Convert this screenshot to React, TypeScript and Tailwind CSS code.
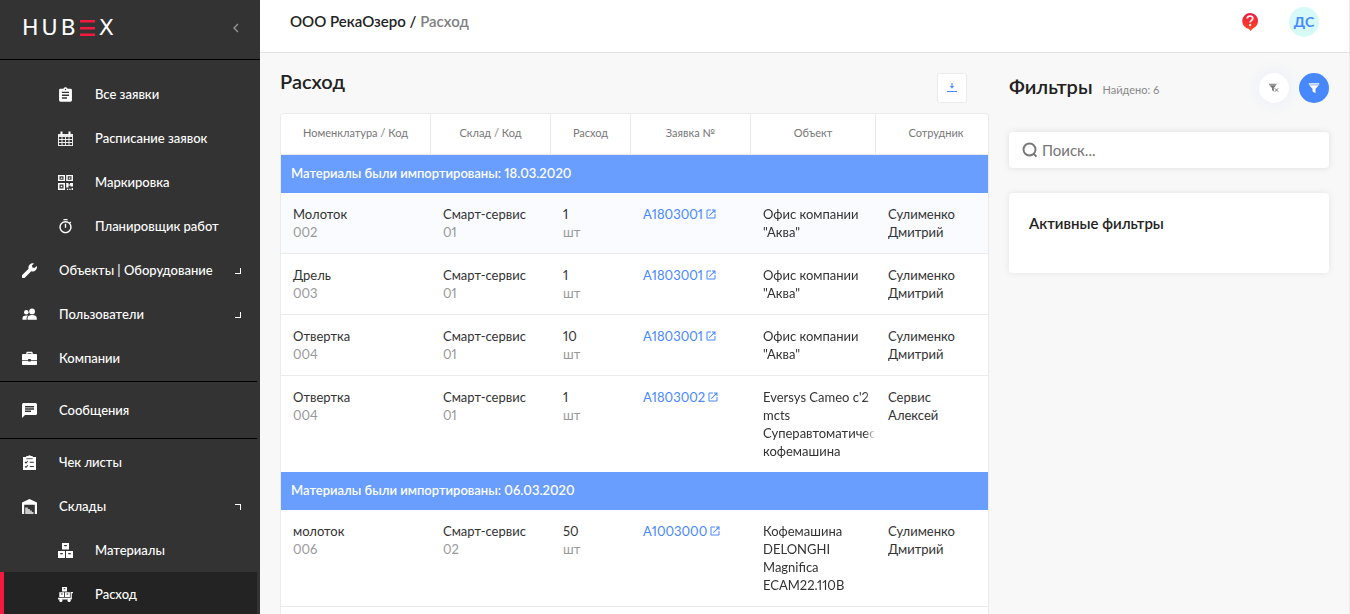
import type { ReactNode } from "react";

const MDI = {
  tasks:
    "M19 3h-4.18C14.4 1.84 13.3 1 12 1s-2.4.84-2.82 2H5a2 2 0 0 0-2 2v14c0 1.1.9 2 2 2h14a2 2 0 0 0 2-2V5a2 2 0 0 0-2-2zm-7 0a1 1 0 1 1 0 2 1 1 0 0 1 0-2zm2 14H7v-2h7v2zm3-4H7v-2h10v2zm0-4H7V7h10v2z",
  timer:
    "M15 1H9v2h6V1zm-4 13h2V8h-2v6zm8.03-6.61 1.42-1.42c-.43-.51-.9-.99-1.41-1.41l-1.42 1.42A8.96 8.96 0 0 0 12 4a9 9 0 1 0 7.03 3.39zM12 20a7 7 0 1 1 0-14 7 7 0 0 1 0 14z",
  chat: "M20 2H4a2 2 0 0 0-1.99 2L2 22l4-4h14a2 2 0 0 0 2-2V4a2 2 0 0 0-2-2zM6 9h12v2H6V9zm8 5H6v-2h8v2zm4-6H6V6h12v2z",
  external:
    "M19 19H5V5h7V3H5a2 2 0 0 0-2 2v14c0 1.1.9 2 2 2h14a2 2 0 0 0 2-2v-7h-2v7zM14 3v2h3.59l-9.83 9.83 1.41 1.41L19 6.41V10h2V3h-7z",
};

function Glyph({ d, viewBox = "0 0 24 24", className = "size-[15px]" }: { d: string; viewBox?: string; className?: string }) {
  return (
    <svg viewBox={viewBox} fill="currentColor" className={className} aria-hidden="true">
      <path d={d} />
    </svg>
  );
}

function Small({ children }: { children: ReactNode }) {
  return (
    <svg viewBox="0.5 0.5 15 15" fill="currentColor" className="size-[15px]" aria-hidden="true">
      {children}
    </svg>
  );
}

const CalendarIcon = (
  <Small>
    <path
      fillRule="evenodd"
      d="M.5 3.500h15v12H.5zM1.500 6.500v2h2.500v-2zm3.500 0v2h2.500v-2zm3.500 0v2H11v-2zm3.500 0v2h2.500v-2zM1.500 9.500v2h2.500v-2zm3.500 0v2h2.500v-2zm3.500 0v2H11v-2zm3.500 0v2h2.500v-2zM1.500 12.500v2h2.500v-2zm3.500 0v2h2.500v-2zm3.500 0v2H11v-2zm3.500 0v2h2.500v-2z"
      opacity=".9"
    />
    <path d="M3 1h2v3.500H3zM11 1h2v3.500h-2z" />
  </Small>
);

const QrIcon = (
  <Small>
    <path
      fillRule="evenodd"
      d="M.5.5h7v6h-7zm1.500 1.300v3.400h4V1.800zM8.700.5h6.800v6H8.700zm1.500 1.300v3.400H14V1.800zM.5 8.500h7v7h-7zm1.500 1.500v4h4v-4z"
    />
    <path d="M3.200 2.900h1.600v1.400H3.200zM11.300 2.900h1.600v1.400h-1.600zM3.200 11.200h1.600v1.600H3.200zM8.700 8.500H11V10h1.500V8.500h3V12H13v-1h-2v2H8.700zM9.300 14.300h1.400v1.200H9.300zM11.700 14.300h1.400v1.200h-1.400zM14.100 13.500h1.400v2h-1.400z" />
  </Small>
);

const WrenchIcon = (
  <Small>
    <path d="M15.200 3.400 12.900 5.600l-2-.5-.5-2L12.600.9a4.300 4.300 0 0 0-5.500 5.300L.7 12.600a1.700 1.700 0 0 0 2.600 2.600l6.400-6.400a4.300 4.300 0 0 0 5.500-5.400z" />
  </Small>
);

const UsersIcon = (
  <Small>
    <circle cx="4.800" cy="5.800" r="2.300" />
    <circle cx="10.600" cy="4.900" r="2.900" />
    <path d="M1 13.200V11.500C1 9.800 2.600 9 4.800 9c.7 0 1.300.1 1.800.3-1 .6-1.500 1.500-1.500 2.600v1.300zM6 13.200v-1.400c0-2 2-3.200 4.600-3.200s4.700 1.200 4.700 3.200v1.400z" />
  </Small>
);

const BriefcaseIcon = (
  <Small>
    <path
      fillRule="evenodd"
      d="M4.800 3.500V2.700c0-.9.5-1.400 1.200-1.400h4c.7 0 1.200.5 1.200 1.400v.8h3.300c.6 0 1 .4 1 1v5H9.300v-1H6.700v1H.5v-5c0-.6.4-1 1-1zm1.200 0h4v-.8H6z"
    />
    <path d="M.5 10.200h6.200v.9h2.600v-.9h6.200V13.500c0 .6-.4 1-1 1h-13c-.6 0-1-.4-1-1z" />
  </Small>
);

const ChecklistIcon = (
  <Small>
    <path d="M1.500 2.500h3.300V1.600h1.900a1.400 1.400 0 0 1 2.600 0h1.900v.9h3.300v13h-13z" />
    <path d="M4.800 4.200h6.400" stroke="#333333" strokeWidth=".8" />
    <path
      d="m3.500 7.500 1 1 1.800-2M3.500 11.800l1 1 1.800-2M8.300 7.700h4M8.300 12h4"
      fill="none"
      stroke="#333333"
      strokeWidth="1.100"
    />
  </Small>
);

const WarehouseIcon = (
  <Small>
    <path fillRule="evenodd" d="M8 .5 15.500 4v11.500h-2.200V6.300H2.700v9.200H.5V4z" />
    <path d="M3.700 9h2.600v1.500h2V12h2v1.500H12v2H3.700z" opacity=".75" />
  </Small>
);

const BoxesIcon = (
  <Small>
    <path
      fillRule="evenodd"
      d="M4.500.5h7v6.500h-7zm2.200 2v1.200h2.600V2.500zM.5 8.500h7v7h-7zm2.200 2v1.200h2.600v-1.200zM8.500 8.500h7v7h-7zm2.200 2v1.200h2.600v-1.200z"
    />
  </Small>
);

const CartIcon = (
  <Small>
    <path
      fillRule="evenodd"
      d="M4.500.5h5v4.500h-5zm1.700 1.300v.9h1.600v-.9zM1.800 5.700h4.900v4.800H1.800zm1.600 1.400v.8h1.700v-.8zM7.500 5.700h4.900v4.800H7.500zm1.600 1.400v.8h1.700v-.8z"
    />
    <path d="M.5 11.200h12.600V5.500h2.400v1.200h-1.200v6.400H.5z" />
    <circle cx="3.400" cy="13.900" r="1.600" />
    <circle cx="11.600" cy="13.900" r="1.600" />
  </Small>
);

type Item = {
  label: string;
  icon: ReactNode;
  nested?: boolean;
  corner?: "down" | "up";
  active?: boolean;
};

const NAV: Item[][] = [
  [
    { label: "Все заявки", icon: <Glyph d={MDI.tasks} viewBox="1.500 .5 21 21" />, nested: true },
    { label: "Расписание заявок", icon: CalendarIcon, nested: true },
    { label: "Маркировка", icon: QrIcon, nested: true },
    { label: "Планировщик работ", icon: <Glyph d={MDI.timer} viewBox="1 1 22 22" />, nested: true },
    { label: "Объекты | Оборудование", icon: WrenchIcon, corner: "down" },
    { label: "Пользователи", icon: UsersIcon, corner: "down" },
    { label: "Компании", icon: BriefcaseIcon },
  ],
  [{ label: "Сообщения", icon: <Glyph d={MDI.chat} viewBox="2 2 20 20" /> }],
  [
    { label: "Чек листы", icon: ChecklistIcon },
    { label: "Склады", icon: WarehouseIcon, corner: "up" },
    { label: "Материалы", icon: BoxesIcon, nested: true },
    { label: "Расход", icon: CartIcon, nested: true, active: true },
  ],
];

const GROUP_STYLES = ["pt-3 pb-px", "border-t border-black py-1.5", "border-t border-black pt-px"];

function NavItem({ item }: { item: Item }) {
  return (
    <li>
      <a
        href="#"
        aria-current={item.active ? "page" : undefined}
        className={`flex h-11 items-center border-l-4 pt-px pr-4 ${item.nested ? "pl-[54px]" : "pl-[18px]"} ${
          item.active ? "border-[#f5183f] bg-[#232323]" : "border-transparent"
        }`}
      >
        <span className="flex w-[37px] shrink-0">{item.icon}</span>
        <span className="flex-1 whitespace-nowrap">{item.label}</span>
        {item.corner && (
          <span
            className={`size-1.5 border-r border-white ${item.corner === "down" ? "border-b" : "border-t"}`}
          />
        )}
      </a>
    </li>
  );
}

function Sidebar() {
  return (
    <aside className="flex w-[260px] shrink-0 flex-col bg-[#333333] text-[13px] font-medium text-white">
      <div className="flex h-[60px] shrink-0 items-center justify-between border-b border-black pr-5 pb-[3px] pl-[22px]">
        <a
          href="#"
          aria-label="HubEx"
          className="flex items-center gap-[3px] font-['DejaVu_Sans'] text-[22px] leading-none font-normal"
        >
          <span>H</span>
          <span>U</span>
          <span>B</span>
          <svg viewBox="0 0 15 16" className="mx-px h-4 w-[15px]" fill="#f5183f" aria-hidden="true">
            <path d="M0 0h15v2.500H0zM0 7h15v2.500H0zM0 13.500h15V16H0z" />
          </svg>
          <span>X</span>
        </a>
        <button type="button" aria-label="Свернуть меню" className="text-[#999999]">
          <svg viewBox="0 0 8 10" className="h-2.5 w-2" fill="none" stroke="currentColor" strokeWidth="1.300">
            <path d="M6 1 2 5l4 4" />
          </svg>
        </button>
      </div>
      <nav className="mr-[3px] min-h-0 flex-1 overflow-hidden">
        {NAV.map((group, i) => (
          <ul key={i} className={GROUP_STYLES[i]}>
            {group.map((item) => (
              <NavItem key={item.label} item={item} />
            ))}
          </ul>
        ))}
      </nav>
    </aside>
  );
}

type Row = {
  name: string;
  code: string;
  stockCode: string;
  qty: string;
  request: string;
  object: string[];
  person: string[];
};

const OFFICE = ["Офис компании", '"Аква"'];
const SULIMENKO = ["Сулименко", "Дмитрий"];

const GROUPS: { title: string; rows: Row[] }[] = [
  {
    title: "Материалы были импортированы: 18.03.2020",
    rows: [
      { name: "Молоток", code: "002", stockCode: "01", qty: "1", request: "A1803001", object: OFFICE, person: SULIMENKO },
      { name: "Дрель", code: "003", stockCode: "01", qty: "1", request: "A1803001", object: OFFICE, person: SULIMENKO },
      { name: "Отвертка", code: "004", stockCode: "01", qty: "10", request: "A1803001", object: OFFICE, person: SULIMENKO },
      {
        name: "Отвертка",
        code: "004",
        stockCode: "01",
        qty: "1",
        request: "A1803002",
        object: ["Eversys Cameo c'2", "mcts", "Суперавтоматическая", "кофемашина"],
        person: ["Сервис", "Алексей"],
      },
    ],
  },
  {
    title: "Материалы были импортированы: 06.03.2020",
    rows: [
      {
        name: "молоток",
        code: "006",
        stockCode: "02",
        qty: "50",
        request: "A1003000",
        object: ["Кофемашина", "DELONGHI", "Magnifica", "ECAM22.110B"],
        person: SULIMENKO,
      },
    ],
  },
];

const COLUMNS = ["Номенклатура / Код", "Склад / Код", "Расход", "Заявка №", "Объект", "Сотрудник"];

function Lines({ lines }: { lines: string[] }) {
  return (
    <div className="overflow-hidden whitespace-nowrap">
      {lines.map((line) => (
        <div key={line}>{line}</div>
      ))}
    </div>
  );
}

function MaterialsTable() {
  return (
    <div className="flex-1 overflow-hidden rounded-t border border-b-0 border-[#ebebeb] bg-white">
      <table className="w-[715px] table-fixed border-separate border-spacing-0 text-left proportional-nums">
        <colgroup>
          <col className="w-[150px]" />
          <col className="w-[120px]" />
          <col className="w-[80px]" />
          <col className="w-[120px]" />
          <col className="w-[125px]" />
          <col className="w-[120px]" />
        </colgroup>
        <thead>
          <tr>
            {COLUMNS.map((c) => (
              <th
                key={c}
                scope="col"
                className="h-[41px] border-r border-b border-[#ebebeb] p-0 pb-px text-center text-[11px] font-normal text-[#777777] last:border-r-0"
              >
                {c}
              </th>
            ))}
          </tr>
        </thead>
        {GROUPS.map((group, g) => (
          <tbody key={group.title}>
            <tr>
              <th colSpan={6} scope="colgroup" className="h-[38px] bg-[#699eff] px-2.5 py-0 text-[13px] font-semibold text-white">
                {group.title}
              </th>
            </tr>
            {group.rows.map((row, r) => (
              <tr
                key={r}
                className={`align-top text-[13px] leading-[18px] text-[#333333] *:border-[#ebebeb] *:py-3 *:pl-3 ${
                  g === 0 && r === 0 ? "bg-[#f9fbfe]" : ""
                } ${g === 0 && r === group.rows.length - 1 ? "" : "*:border-b"}`}
              >
                <td>
                  <div>{row.name}</div>
                  <div className="text-[#999999]">{row.code}</div>
                </td>
                <td>
                  <div className="whitespace-nowrap">Смарт-сервис</div>
                  <div className="text-[#999999]">{row.stockCode}</div>
                </td>
                <td>
                  <div>{row.qty}</div>
                  <div className="text-[#999999]">шт</div>
                </td>
                <td>
                  <a href="#" className="flex items-center gap-[3px] text-[#4788ff]">
                    {row.request}
                    <Glyph d={MDI.external} viewBox="2 2 20 20" className="size-2.5" />
                  </a>
                </td>
                <td>
                  <div className="mask-r-from-[90%] mask-r-to-100%">
                    <Lines lines={row.object} />
                  </div>
                </td>
                <td>
                  <Lines lines={row.person} />
                </td>
              </tr>
            ))}
          </tbody>
        ))}
      </table>
    </div>
  );
}

function Filters() {
  return (
    <aside className="w-80 shrink-0">
      <div className="flex h-[70px] items-center justify-between">
        <div className="flex items-baseline gap-2.5 pb-1">
          <h2 className="text-[20px] font-semibold text-[#222222]">Фильтры</h2>
          <span className="text-[11px] text-[#888888]">Найдено: 6</span>
        </div>
        <div className="flex gap-2.5">
          <button
            type="button"
            aria-label="Сбросить фильтры"
            className="flex size-[30px] items-center justify-center rounded-full bg-white text-[#777777] shadow-[0_0_16px_#e8ecf8]"
          >
            <svg viewBox="0 0 10 10" className="size-2.5" fill="currentColor" aria-hidden="true">
              <path d="M0 .7h7.500v1H0zM.3 2.200h6.900L4.800 5v3.500L3 7.300V5z" />
              <path d="m5.800 5.300 3.400 3.400M9.200 5.300 5.800 8.700" stroke="currentColor" strokeWidth="1" />
            </svg>
          </button>
          <button
            type="button"
            aria-label="Показать фильтры"
            className="flex size-[30px] items-center justify-center rounded-full bg-[#4788ff] text-white"
          >
            <svg viewBox="0 0 12 12" className="size-3" fill="currentColor" aria-hidden="true">
              <path d="M.8 1h10.400v1.800H.8z" opacity=".75" />
              <path d="M1.200 3.300h9.600L7.500 6.800v4.400l-3-1.600V6.800z" />
            </svg>
          </button>
        </div>
      </div>
      <label className="mt-[9px] flex h-9 items-center gap-1 rounded-sm bg-white px-[13px] shadow-[0_0_6px_#dddddd]">
        <svg viewBox="0 0 16 16" className="size-4" fill="none" stroke="#777777" strokeWidth="1.900" aria-hidden="true">
          <circle cx="7.500" cy="7.500" r="6" />
          <path d="m11.500 11.500 3 3.200" />
        </svg>
        <input
          type="search"
          aria-label="Поиск"
          placeholder="Поиск..."
          className="min-w-0 flex-1 bg-transparent text-[15px] outline-none placeholder:text-[#757575]"
        />
      </label>
      <section className="mt-[25px] h-20 rounded bg-white px-5 pt-5 shadow-[0_0_6px_#e4e4e4]">
        <h3 className="text-[15px] leading-5 font-semibold text-[#222222]">Активные фильтры</h3>
      </section>
    </aside>
  );
}

export default function App() {
  return (
    <div className="flex h-screen overflow-hidden bg-[#f8f8f8] font-['Lato','Noto_Sans',sans-serif]">
      <Sidebar />
      <div className="flex min-w-0 flex-1 flex-col border-r border-[#ebebeb]">
        <header className="flex h-[53px] shrink-0 items-center justify-between border-b border-[#e3e3e3] bg-white px-[30px] pb-2 text-[15px] font-semibold text-[#222222]">
          <div className="pb-px">
            ООО РекаОзеро / <span className="text-[#808080]">Расход</span>
          </div>
          <div className="flex items-center gap-[30px]">
            <a href="#" aria-label="Помощь">
              <svg viewBox="0 0 18 20" className="h-5 w-[18px]" aria-hidden="true">
                <defs>
                  <linearGradient id="help" x1="0" y1="0" x2="0" y2="1">
                    <stop offset="0" stopColor="#f2183f" />
                    <stop offset="1" stopColor="#fb4a22" />
                  </linearGradient>
                </defs>
                <path d="M9 1a8 8 0 0 0-1 15.900L9.600 19l2.200-2.500A8 8 0 0 0 9 1z" fill="url(#help)" />
                <path
                  d="M6.300 6.500C6.300 4.800 7.500 4 9 4s2.800.9 2.800 2.400c0 1.900-2.700 2-2.700 4.200"
                  fill="none"
                  stroke="#ffffff"
                  strokeWidth="1.700"
                />
                <circle cx="9.100" cy="13.200" r="1.150" fill="#ffffff" />
              </svg>
            </a>
            <button
              type="button"
              className="flex size-[30px] items-center justify-center rounded-full bg-[#d5faf8] pb-0.5 text-[14px] font-bold text-[#4788ff]"
            >
              ДС
            </button>
          </div>
        </header>
        <div className="flex min-h-0 flex-1 gap-5 px-5">
          <main className="flex min-w-0 flex-1 flex-col">
            <div className="flex h-[60px] shrink-0 items-start justify-between pr-[22px]">
              <h1 className="pt-[13px] text-[20px] leading-[30px] font-semibold text-[#222222]">Расход</h1>
              <button
                type="button"
                aria-label="Скачать"
                className="mt-5 flex size-[30px] items-center justify-center rounded-xs border border-[#ebebeb] bg-white text-[#4788ff]"
              >
                <svg viewBox="0 0 10 10" className="size-2.5" fill="currentColor" aria-hidden="true">
                  <path d="M4.500 0h1v3h1.700L5 5.500 2.800 3h1.700zM0 8h10v1H0z" />
                </svg>
              </button>
            </div>
            <MaterialsTable />
          </main>
          <Filters />
        </div>
      </div>
    </div>
  );
}
